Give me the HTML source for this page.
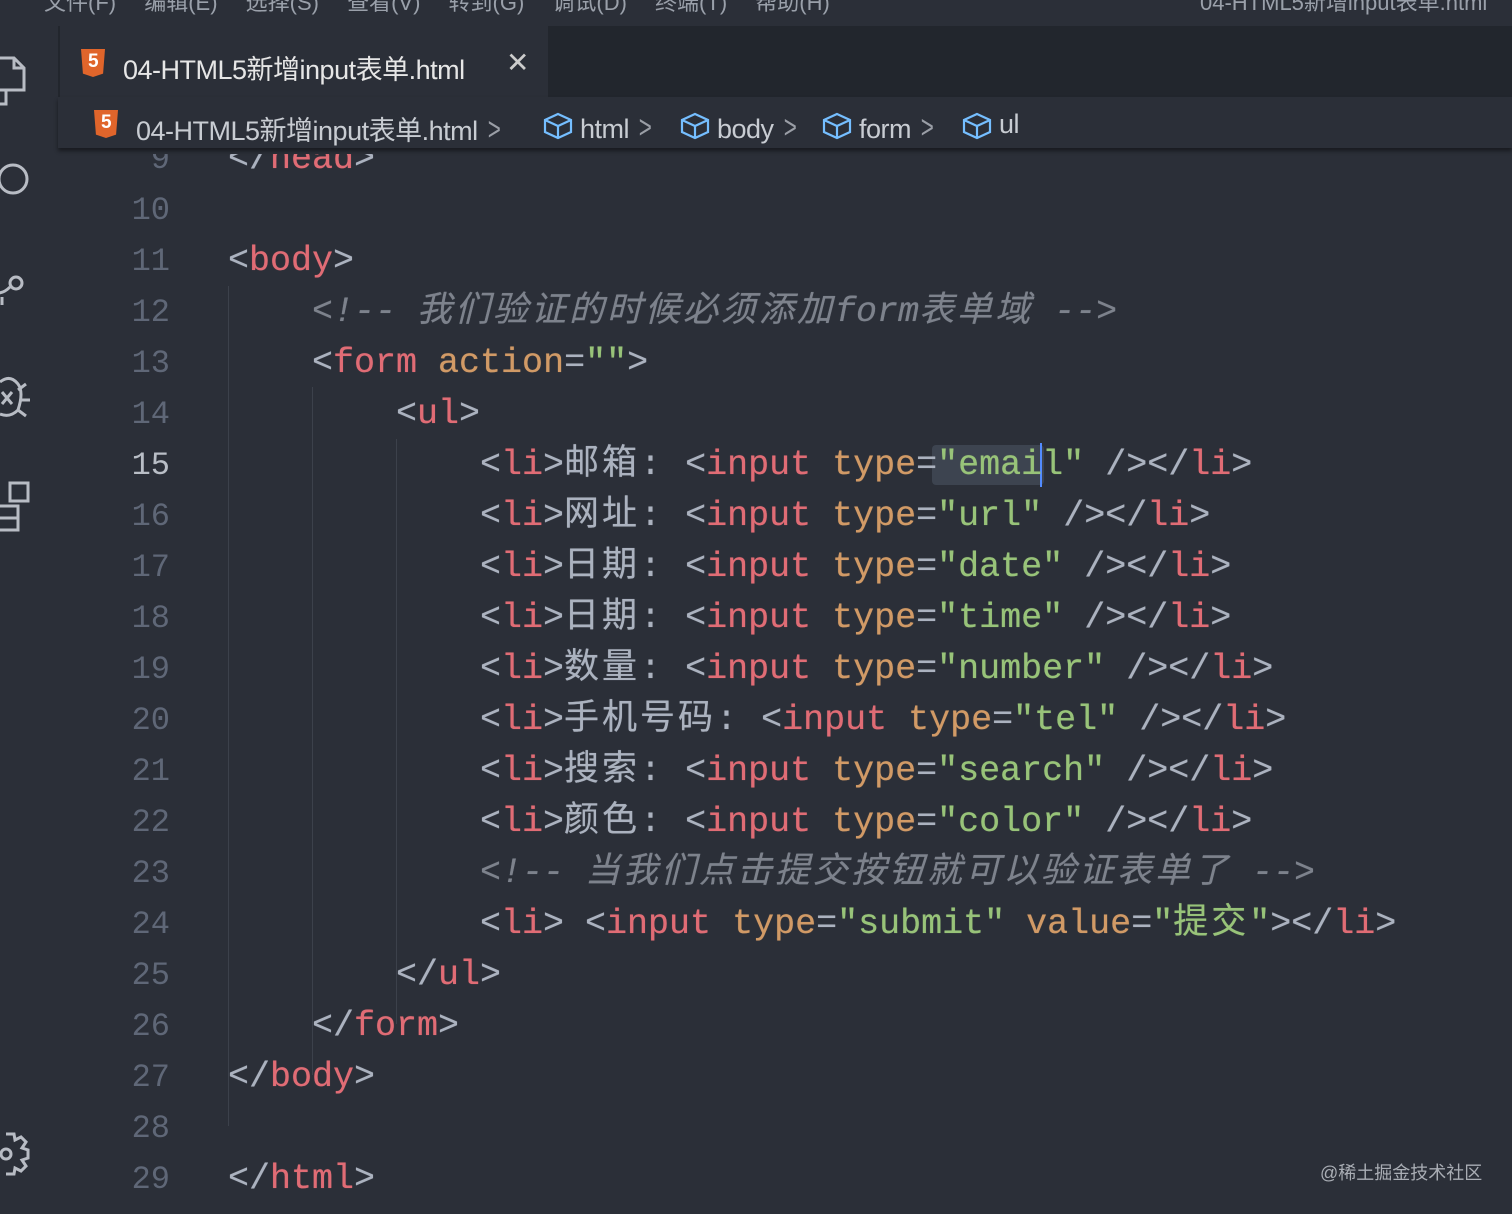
<!DOCTYPE html>
<html><head><meta charset="utf-8"><style>
*{margin:0;padding:0;box-sizing:border-box}
body{width:1512px;height:1214px;overflow:hidden;background:#2b2f38;position:relative;font-family:"Liberation Sans","Noto Sans CJK SC",sans-serif}
.menu{position:absolute;left:0;top:0;width:1512px;height:26px;background:#2b2f38;color:#9aa0aa;font-size:22px;line-height:6px;white-space:nowrap;overflow:hidden}
.tabs{position:absolute;left:0;top:26px;width:1512px;height:74px;background:#22262d}
.side{position:absolute;left:0;top:26px;width:58px;height:1188px;background:#2b2f38}
.tab{position:absolute;left:60px;top:26px;width:488px;height:74px;background:#2b2f38;color:#e6e6e6;font-size:27px;letter-spacing:-0.5px}
.crumb{position:absolute;left:58px;top:100px;width:1454px;height:48px;background:#2b2f38;box-shadow:0 3px 4px rgba(0,0,0,.45);z-index:3;color:#c8ccd2;font-size:27px;white-space:nowrap;letter-spacing:-0.5px}
.ch{color:#9a9ea6;font-size:32px;display:inline-block;transform:scaleX(.7)}
.h5{position:absolute;width:24px;height:28px;background:#e0652b;color:#fff;font:bold 19px "Liberation Sans";text-align:center;line-height:26px;clip-path:polygon(0 0,100% 0,92% 88%,50% 100%,8% 88%)}
.code{position:absolute;left:0;top:154px;width:1512px;height:1060px;overflow:hidden}
.ln{position:absolute;left:60px;width:110px;text-align:right;font:32px "Liberation Mono",monospace;color:#5f6777;line-height:51px}
.l{position:absolute;font:35px "Liberation Mono","Noto Sans CJK SC",monospace;color:#abb2bf;white-space:pre;line-height:51px;text-shadow:0 0 .6px currentColor}
.t{color:#e06c75}.a{color:#d19a66}.s{color:#98c379}.c{color:#7d828c;font-style:italic}
.z{letter-spacing:3px}
.g{position:absolute;width:1px;background:#3c414b}
svg{position:absolute}
</style></head><body>
<div class="menu"><span style="position:absolute;left:44px;top:0">文件(F)　 编辑(E)　 选择(S)　 查看(V)　 转到(G)　 调试(D)　 终端(T)　 帮助(H)</span><span style="position:absolute;left:1200px;top:0">04-HTML5新增input表单.html</span></div>
<div class="tabs"></div>
<div class="side"></div>
<div class="tab"><div class="h5" style="left:21px;top:23px">5</div><span style="position:absolute;left:63px;top:22px">04-HTML5新增input表单.html</span><span style="position:absolute;left:446px;top:20px;font-size:28px;color:#ccc">✕</span></div>
<div class="crumb" style="top:97px;height:51px">
<div class="h5" style="left:36px;top:13px">5</div>
<span style="position:absolute;left:78px;top:12px">04-HTML5新增input表单.html <span class="ch">&gt;</span></span>
<span style="position:absolute;left:522px;top:12px">html <span class="ch">&gt;</span></span>
<span style="position:absolute;left:659px;top:12px">body <span class="ch">&gt;</span></span>
<span style="position:absolute;left:801px;top:12px">form <span class="ch">&gt;</span></span>
<span style="position:absolute;left:941px;top:12px">ul</span>
<svg style="left:484px;top:14px" width="32" height="30" viewBox="0 0 32 30"><path d="M16 3 L29 9 L29 21 L16 27 L3 21 L3 9 Z M3 9 L16 15 L29 9 M16 15 L16 27" fill="none" stroke="#75beff" stroke-width="2.2"/></svg>
<svg style="left:621px;top:14px" width="32" height="30" viewBox="0 0 32 30"><path d="M16 3 L29 9 L29 21 L16 27 L3 21 L3 9 Z M3 9 L16 15 L29 9 M16 15 L16 27" fill="none" stroke="#75beff" stroke-width="2.2"/></svg>
<svg style="left:763px;top:14px" width="32" height="30" viewBox="0 0 32 30"><path d="M16 3 L29 9 L29 21 L16 27 L3 21 L3 9 Z M3 9 L16 15 L29 9 M16 15 L16 27" fill="none" stroke="#75beff" stroke-width="2.2"/></svg>
<svg style="left:903px;top:14px" width="32" height="30" viewBox="0 0 32 30"><path d="M16 3 L29 9 L29 21 L16 27 L3 21 L3 9 Z M3 9 L16 15 L29 9 M16 15 L16 27" fill="none" stroke="#75beff" stroke-width="2.2"/></svg>
</div>
<svg style="left:0;top:50px;z-index:4" width="40" height="70" viewBox="0 0 40 70"><path d="M-4 8 H14 L24 18 V40 H-4 M14 8 V18 H24 M6 40 V54 H-4" fill="none" stroke="#b8bcc4" stroke-width="3"/></svg>
<svg style="left:0;top:155px;z-index:4" width="40" height="50" viewBox="0 0 40 50"><circle cx="13" cy="24" r="14" fill="none" stroke="#b8bcc4" stroke-width="3"/></svg>
<svg style="left:0;top:265px;z-index:4" width="40" height="50" viewBox="0 0 40 50"><circle cx="16" cy="18" r="6" fill="none" stroke="#b8bcc4" stroke-width="3"/><path d="M10 22 Q4 28 -2 28 M2 32 V40" fill="none" stroke="#b8bcc4" stroke-width="3"/></svg>
<svg style="left:0;top:370px;z-index:4" width="40" height="60" viewBox="0 0 40 60"><path d="M0 12 Q10 4 18 14 M18 14 Q24 22 18 40 Q10 48 0 44 M2 22 L12 34 M12 22 L2 34 M18 20 L26 14 M20 30 H30 M18 40 L26 46" fill="none" stroke="#b8bcc4" stroke-width="3"/></svg>
<svg style="left:0;top:478px;z-index:4" width="40" height="60" viewBox="0 0 40 60"><rect x="10" y="5" width="18" height="18" fill="none" stroke="#b8bcc4" stroke-width="3"/><path d="M-2 28 H18 V52 H-2 M-2 40 H18" fill="none" stroke="#b8bcc4" stroke-width="3"/></svg>
<svg style="left:0;top:1130px;z-index:4" width="40" height="50" viewBox="0 0 40 50"><path d="M6 4 L14 4 L15 10 L21 7 L26 12 L22 18 L28 20 L28 28 L22 30 L26 36 L21 41 L15 38 L14 44 L6 44" fill="none" stroke="#b8bcc4" stroke-width="3"/><circle cx="6" cy="24" r="5" fill="none" stroke="#b8bcc4" stroke-width="3"/></svg>

<div class="code">
<div class="g" style="left:228px;top:132px;height:840px"></div>
<div class="g" style="left:312px;top:233px;height:688px"></div>
<div class="g" style="left:396px;top:285px;height:585px"></div>
<div class="ln" style="top:-20px">9</div>
<div class="ln" style="top:31px">10</div>
<div class="ln" style="top:82px">11</div>
<div class="ln" style="top:133px">12</div>
<div class="ln" style="top:184px">13</div>
<div class="ln" style="top:235px">14</div>
<div class="ln" style="top:286px;color:#b9bec6">15</div>
<div class="ln" style="top:337px">16</div>
<div class="ln" style="top:388px">17</div>
<div class="ln" style="top:439px">18</div>
<div class="ln" style="top:490px">19</div>
<div class="ln" style="top:541px">20</div>
<div class="ln" style="top:592px">21</div>
<div class="ln" style="top:643px">22</div>
<div class="ln" style="top:694px">23</div>
<div class="ln" style="top:745px">24</div>
<div class="ln" style="top:796px">25</div>
<div class="ln" style="top:847px">26</div>
<div class="ln" style="top:898px">27</div>
<div class="ln" style="top:949px">28</div>
<div class="ln" style="top:1000px">29</div>

<div class="l" style="left:228px;top:-20px">&lt;/<span class="t">head</span>&gt;</div>
<div class="l" style="left:228px;top:82px">&lt;<span class="t">body</span>&gt;</div>
<div class="l c" style="left:312px;top:133px">&lt;!-- <span class="z">我们验证的时候必须添加</span>form<span class="z">表单域</span> --&gt;</div>
<div class="l" style="left:312px;top:184px">&lt;<span class="t">form</span> <span class="a">action</span>=<span class="s">""</span>&gt;</div>
<div class="l" style="left:396px;top:235px">&lt;<span class="t">ul</span>&gt;</div>
<div style="position:absolute;left:932px;top:291px;width:112px;height:40px;background:#3d4450;border-radius:4px"></div>
<div style="position:absolute;left:1040px;top:289px;width:2px;height:44px;background:#528bff"></div>
<div class="l" style="left:480px;top:286px">&lt;<span class="t">li</span>&gt;<span class="z">邮箱:</span> &lt;<span class="t">input</span> <span class="a">type</span>=<span class="s">"email"</span> /&gt;&lt;/<span class="t">li</span>&gt;</div>
<div class="l" style="left:480px;top:337px">&lt;<span class="t">li</span>&gt;<span class="z">网址:</span> &lt;<span class="t">input</span> <span class="a">type</span>=<span class="s">"url"</span> /&gt;&lt;/<span class="t">li</span>&gt;</div>
<div class="l" style="left:480px;top:388px">&lt;<span class="t">li</span>&gt;<span class="z">日期:</span> &lt;<span class="t">input</span> <span class="a">type</span>=<span class="s">"date"</span> /&gt;&lt;/<span class="t">li</span>&gt;</div>
<div class="l" style="left:480px;top:439px">&lt;<span class="t">li</span>&gt;<span class="z">日期:</span> &lt;<span class="t">input</span> <span class="a">type</span>=<span class="s">"time"</span> /&gt;&lt;/<span class="t">li</span>&gt;</div>
<div class="l" style="left:480px;top:490px">&lt;<span class="t">li</span>&gt;<span class="z">数量:</span> &lt;<span class="t">input</span> <span class="a">type</span>=<span class="s">"number"</span> /&gt;&lt;/<span class="t">li</span>&gt;</div>
<div class="l" style="left:480px;top:541px">&lt;<span class="t">li</span>&gt;<span class="z">手机号码:</span> &lt;<span class="t">input</span> <span class="a">type</span>=<span class="s">"tel"</span> /&gt;&lt;/<span class="t">li</span>&gt;</div>
<div class="l" style="left:480px;top:592px">&lt;<span class="t">li</span>&gt;<span class="z">搜索:</span> &lt;<span class="t">input</span> <span class="a">type</span>=<span class="s">"search"</span> /&gt;&lt;/<span class="t">li</span>&gt;</div>
<div class="l" style="left:480px;top:643px">&lt;<span class="t">li</span>&gt;<span class="z">颜色:</span> &lt;<span class="t">input</span> <span class="a">type</span>=<span class="s">"color"</span> /&gt;&lt;/<span class="t">li</span>&gt;</div>
<div class="l c" style="left:480px;top:694px">&lt;!-- <span class="z">当我们点击提交按钮就可以验证表单了</span> --&gt;</div>
<div class="l" style="left:480px;top:745px">&lt;<span class="t">li</span>&gt; &lt;<span class="t">input</span> <span class="a">type</span>=<span class="s">"submit"</span> <span class="a">value</span>=<span class="s">"<span class="z">提交</span>"</span>&gt;&lt;/<span class="t">li</span>&gt;</div>
<div class="l" style="left:396px;top:796px">&lt;/<span class="t">ul</span>&gt;</div>
<div class="l" style="left:312px;top:847px">&lt;/<span class="t">form</span>&gt;</div>
<div class="l" style="left:228px;top:898px">&lt;/<span class="t">body</span>&gt;</div>
<div class="l" style="left:228px;top:1000px">&lt;/<span class="t">html</span>&gt;</div>
</div>
<div style="position:absolute;left:1320px;top:1159px;font-size:18px;color:#a9adb4">@稀土掘金技术社区</div>
</body></html>
